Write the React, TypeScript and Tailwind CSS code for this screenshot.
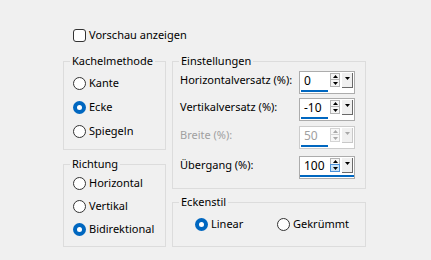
import type { ReactNode } from "react";

function Radio({ checked }: { checked?: boolean }) {
  if (checked) {
    return (
      <span className="flex h-[13px] w-[13px] shrink-0 items-center justify-center rounded-full bg-[#0067c0]">
        <span className="h-[5px] w-[5px] rounded-full bg-white" />
      </span>
    );
  }
  return <span className="h-[13px] w-[13px] shrink-0 rounded-full border border-[#333333] bg-white" />;
}

function RadioRow({ label, checked, className = "" }: { label: string; checked?: boolean; className?: string }) {
  return (
    <div className={`flex h-[16px] items-center gap-[3px] ${className}`}>
      <Radio checked={checked} />
      <span className="whitespace-nowrap leading-[16px]">{label}</span>
    </div>
  );
}

function Group({ title, className = "", children }: { title: string; className?: string; children: ReactNode }) {
  return (
    <fieldset className={`border border-[#dcdcdc] px-[6px] ${className}`}>
      <legend className="px-[2px] leading-[16px]">{title}</legend>
      {children}
    </fieldset>
  );
}

function Tri({ up, color }: { up?: boolean; color: string }) {
  return (
    <svg width="5" height="3" viewBox="0 0 5 3">
      <polygon points={up ? "2.5,0 5,3 0,3" : "0,0 5,0 2.5,3"} fill={color} />
    </svg>
  );
}

function Spinner({ value, disabled, focused }: { value: string; disabled?: boolean; focused?: boolean }) {
  const ink = disabled ? "#a8a8a8" : "#000000";
  return (
    <div
      className={
        disabled
          ? "flex h-[23px] w-[56px] shrink-0 flex-col border border-[#cccccc] bg-white pt-[1px]"
          : "flex h-[23px] w-[56px] shrink-0 flex-col border border-[#acacac] bg-white pt-[1px]"
      }
    >
      <div className="flex h-[16px] items-start">
        <span
          className={
            disabled
              ? "w-[30px] pl-[4px] text-[12px] leading-[16px] text-[#a0a0a0]"
              : "w-[30px] pl-[4px] text-[12px] leading-[16px]"
          }
        >
          {value}
        </span>
        <div className="flex w-[10px] flex-col">
          <div
            className={
              disabled
                ? "flex h-[7px] items-center justify-center border border-[#d4d4d4] bg-[#f7f7f7]"
                : "flex h-[7px] items-center justify-center border border-[#b4b4b4] bg-[#f5f5f5]"
            }
          >
            <Tri up color={ink} />
          </div>
          <div
            className={
              focused
                ? "-mt-px flex h-[8px] items-center justify-center border border-[#4a90d9] bg-[#cce4f7]"
                : disabled
                  ? "-mt-px flex h-[8px] items-center justify-center border border-[#d4d4d4] bg-[#f7f7f7]"
                  : "-mt-px flex h-[8px] items-center justify-center border border-[#b4b4b4] bg-[#f5f5f5]"
            }
          >
            <Tri color={ink} />
          </div>
        </div>
        <div
          className={
            disabled
              ? "ml-[2px] flex h-[15px] w-[11px] justify-center border-b border-r border-[#c8c8c8] bg-[#f0f0f0] pt-[4px]"
              : "ml-[2px] flex h-[15px] w-[11px] justify-center border-b border-r border-[#696969] bg-[#f0f0f0] pt-[4px]"
          }
        >
          <Tri color={ink} />
        </div>
      </div>
      <div className={focused ? "mt-[1px] h-[2px] w-full bg-[#0067c0]" : "ml-[1px] mt-[1px] h-[2px] w-[27px] bg-[#0067c0]"} />
    </div>
  );
}

function Row({
  label,
  value,
  disabled,
  focused,
  className = "",
}: {
  label: string;
  value: string;
  disabled?: boolean;
  focused?: boolean;
  className?: string;
}) {
  return (
    <div className={`flex items-start ${className}`}>
      <span
        className={
          disabled
            ? "w-[120px] shrink-0 whitespace-nowrap pl-[1px] pt-[1px] leading-[16px] text-[#a0a0a0]"
            : "w-[120px] shrink-0 whitespace-nowrap pl-[1px] pt-[1px] leading-[16px]"
        }
      >
        {label}
      </span>
      <Spinner value={value} disabled={disabled} focused={focused} />
    </div>
  );
}

export default function App() {
  return (
    <div className="h-[260px] w-[431px] bg-[#f0f0f0] pl-[63px] pt-[27px] font-['Noto_Sans',sans-serif] text-[11px] text-black">
      <div className="flex h-[16px] items-center gap-[3px] pl-[10px]">
        <span className="h-[13px] w-[13px] rounded-[3px] border border-[#333333] bg-white" />
        <span className="leading-[16px]">Vorschau anzeigen</span>
      </div>

      <div className="mt-[10px] flex gap-[6px]">
        <div className="flex w-[103px] flex-col gap-[6px]">
          <Group title="Kachelmethode" className="h-[97px]">
            <div className="mt-[6px] flex flex-col gap-[8px] pl-[3px]">
              <RadioRow label="Kante" />
              <RadioRow label="Ecke" checked />
              <RadioRow label="Spiegeln" />
            </div>
          </Group>
          <Group title="Richtung" className="h-[91px]">
            <div className="mt-[3px] flex flex-col gap-[7px] pl-[3px]">
              <RadioRow label="Horizontal" />
              <RadioRow label="Vertikal" />
              <RadioRow label="Bidirektional" checked />
            </div>
          </Group>
        </div>

        <div className="flex w-[194px] flex-col gap-[5px]">
          <Group title="Einstellungen" className="h-[136px]">
            <Row label="Horizontalversatz (%):" value="0" className="mt-[2px]" />
            <Row label="Vertikalversatz (%):" value="-10" className="mt-[4px]" />
            <Row label="Breite (%):" value="50" disabled className="mt-[5px]" />
            <Row label="Übergang (%):" value="100" focused className="mt-[7px]" />
          </Group>
          <Group title="Eckenstil" className="h-[53px]">
            <div className="mt-[6px] flex pl-[16px]">
              <RadioRow label="Linear" checked className="w-[82px]" />
              <RadioRow label="Gekrümmt" />
            </div>
          </Group>
        </div>
      </div>
    </div>
  );
}
